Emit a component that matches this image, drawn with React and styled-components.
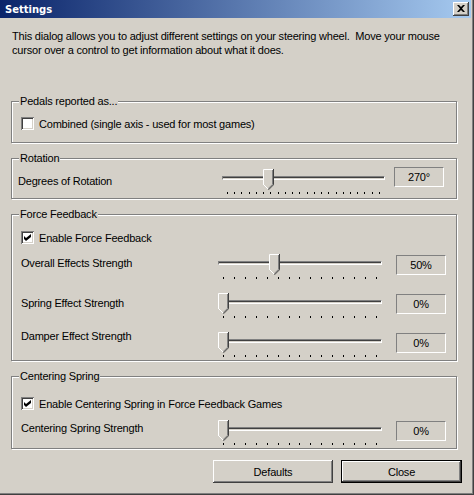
import React from "react";
import styled, { createGlobalStyle } from "styled-components";

const FACE = "#d4d0c8";

const GlobalStyle = createGlobalStyle`
  * { box-sizing: border-box; }
  html, body { margin: 0; padding: 0; background: ${FACE}; }
  body {
    font-family: "Liberation Sans", Arial, sans-serif;
    font-size: 11px;
    color: #000;
  }
`;

const ffRows = [
  { label: "Overall Effects Strength", value: "50%", pos: 51 / 153, top: 7, labelShift: 5 },
  { label: "Spring Effect Strength", value: "0%", pos: 0, top: 11, labelShift: 6 },
  { label: "Damper Effect Strength", value: "0%", pos: 0, top: 11, labelShift: 0 },
];

const CloseGlyph = () => (
  <svg width="8" height="7" viewBox="0 0 8 7">
    <path d="M0 0h2l2 2 2-2h2L5 3.5 8 7H6L4 5 2 7H0l3-3.5z" fill="#000" />
  </svg>
);

const CheckGlyph = () => (
  <svg width="7" height="7" viewBox="0 0 7 7">
    <path d="M0 2l2 2 5-4v3L2 7 0 5z" fill="#000" />
  </svg>
);

const ThumbGlyph = () => (
  <svg width="11" height="21" viewBox="0 0 11 21">
    <path d="M0 0H11V16L5.5 21L0 16Z" fill={FACE} />
    <path d="M0.5 16V0.5H10" stroke="#fff" fill="none" />
    <path d="M0.5 15.5L5 20" stroke="#fff" fill="none" />
    <path d="M10.5 0V15.8L5.5 20.8" stroke="#404040" fill="none" />
    <path d="M9.5 1V15.4L5.2 19.6" stroke="#808080" fill="none" />
  </svg>
);

const Checkbox = ({ checked, children }) => (
  <CheckRow>
    <CheckBox>{checked && <CheckGlyph />}</CheckBox>
    {children}
  </CheckRow>
);

const Slider = ({ pos, ticks }) => (
  <SliderTrackArea>
    <Thumb style={{ left: `calc((100% - 11px) * ${pos})` }}>
      <ThumbGlyph />
    </Thumb>
    <Channel />
    <Ticks>
      {Array.from({ length: ticks }, (_, i) => (
        <Tick key={i} />
      ))}
    </Ticks>
  </SliderTrackArea>
);

export default function App() {
  return (
    <>
      <GlobalStyle />
      <Window>
        <TitleBar>
          <Title>Settings</Title>
          <CaptionButton aria-label="Close">
            <CloseGlyph />
          </CaptionButton>
        </TitleBar>

        <Body>
          <Intro>
            This dialog allows you to adjust different settings on your steering wheel.{"  "}Move your mouse
            <br />
            cursor over a control to get information about what it does.
          </Intro>

          <Group $gap={44} $pad="15px 9px 12px">
            <Legend>Pedals reported as...</Legend>
            <Checkbox>Combined (single axis - used for most games)</Checkbox>
          </Group>

          <Group $gap={15} $pad="7px 9px 4px">
            <Legend>Rotation</Legend>
            <SliderRow $labelWidth={195} $trackWidth={163} $gap={9} $top={0} $indent={-3}>
              <RowLabel $shift={8}>Degrees of Rotation</RowLabel>
              <Slider pos={41 / 152} ticks={22} />
              <ValueBox $shift={1}>270°</ValueBox>
            </SliderRow>
          </Group>

          <Group $gap={15} $pad="16px 9px 3px">
            <Legend>Force Feedback</Legend>
            <Checkbox checked>Enable Force Feedback</Checkbox>
            {ffRows.map((row) => (
              <SliderRow
                key={row.label}
                $labelWidth={183}
                $trackWidth={164}
                $gap={14}
                $top={row.top}
                $indent={0}
              >
                <RowLabel $shift={row.labelShift}>{row.label}</RowLabel>
                <Slider pos={row.pos} ticks={15} />
                <ValueBox $shift={4}>{row.value}</ValueBox>
              </SliderRow>
            ))}
          </Group>

          <Group $gap={15} $pad="20px 9px 3px">
            <Legend>Centering Spring</Legend>
            <Checkbox checked>Enable Centering Spring in Force Feedback Games</Checkbox>
            <SliderRow $labelWidth={183} $trackWidth={164} $gap={14} $top={7} $indent={0}>
              <RowLabel $shift={4}>Centering Spring Strength</RowLabel>
              <Slider pos={0} ticks={15} />
              <ValueBox $shift={4}>0%</ValueBox>
            </SliderRow>
          </Group>

          <ButtonRow>
            <Button $width={120}>Defaults</Button>
            <Button $width={121} $default>
              Close
            </Button>
          </ButtonRow>
        </Body>
      </Window>
    </>
  );
}

const Window = styled.div`
  width: 474px;
  height: 495px;
  display: flex;
  flex-direction: column;
  background: ${FACE};
  box-shadow: inset -1px -1px 0 #404040, inset -2px -2px 0 #808080;
  letter-spacing: -0.2px;
`;

const TitleBar = styled.div`
  height: 18px;
  margin-right: 3px;
  padding: 0 2px 0 5px;
  display: flex;
  align-items: center;
  justify-content: space-between;
  background: linear-gradient(to right, #0a246a, #a6caf0);
`;

const Title = styled.span`
  font-family: "DejaVu Sans", Verdana, sans-serif;
  font-weight: bold;
  font-size: 10px;
  letter-spacing: 0;
  color: #fff;
`;

const CaptionButton = styled.button`
  width: 16px;
  height: 14px;
  margin: 0;
  padding: 0 0 1px;
  border: none;
  display: flex;
  align-items: center;
  justify-content: center;
  background: ${FACE};
  box-shadow: inset -1px -1px 0 #404040, inset 1px 1px 0 #fff,
    inset -2px -2px 0 #808080;
`;

const Body = styled.div`
  flex: 1;
  display: flex;
  flex-direction: column;
  align-items: flex-start;
  padding: 11px 12px 0 11px;
`;

const Intro = styled.p`
  margin: 0 0 0 1px;
  line-height: 14px;
  white-space: pre-wrap;
`;

const Group = styled.div`
  position: relative;
  width: 446px;
  margin-top: ${(p) => p.$gap}px;
  padding: ${(p) => p.$pad};
  display: flex;
  flex-direction: column;
  border: 1px solid #808080;
  box-shadow: 1px 1px 0 #fff, inset 1px 1px 0 #fff;
`;

const Legend = styled.span`
  position: absolute;
  top: -8px;
  left: 7px;
  padding: 0 1px;
  line-height: 14px;
  background: ${FACE};
`;

const CheckRow = styled.div`
  height: 13px;
  display: flex;
  align-items: center;
  gap: 5px;
  line-height: 14px;
`;

const CheckBox = styled.span`
  width: 13px;
  height: 13px;
  flex-shrink: 0;
  display: flex;
  align-items: center;
  justify-content: center;
  background: #fff;
  box-shadow: inset 1px 1px 0 #808080, inset -1px -1px 0 #fff,
    inset 2px 2px 0 #404040, inset -2px -2px 0 ${FACE};
`;

const SliderRow = styled.div`
  height: 28px;
  margin-top: ${(p) => p.$top}px;
  margin-left: ${(p) => p.$indent}px;
  display: grid;
  grid-template-columns: ${(p) => p.$labelWidth}px ${(p) => p.$trackWidth}px 50px;
  column-gap: ${(p) => p.$gap}px;
  align-items: start;
`;

const RowLabel = styled.span`
  margin-top: ${(p) => p.$shift}px;
  line-height: 14px;
  white-space: nowrap;
`;

const ValueBox = styled.div`
  height: 20px;
  margin-top: ${(p) => p.$shift}px;
  display: flex;
  align-items: center;
  justify-content: center;
  line-height: 14px;
  border: 1px solid;
  border-color: #808080 #fff #fff #808080;
`;

const SliderTrackArea = styled.div`
  position: relative;
  height: 28px;
  padding-top: 10px;
`;

const Thumb = styled.div`
  position: absolute;
  top: 3px;
  width: 11px;
  height: 21px;
  line-height: 0;
`;

const Channel = styled.div`
  height: 4px;
  background: ${FACE};
  border-style: solid;
  border-width: 1px;
  border-color: #808080 #fff #fff #808080;
  box-shadow: inset 0 1px 0 #404040;
`;

const Ticks = styled.div`
  height: 2px;
  margin-top: 12px;
  padding: 0 5px;
  display: flex;
  justify-content: space-between;
`;

const Tick = styled.span`
  width: 1px;
  height: 2px;
  background: #000;
`;

const ButtonRow = styled.div`
  align-self: stretch;
  margin-top: 11px;
  display: flex;
  justify-content: flex-end;
  gap: 8px;
`;

const Button = styled.button`
  width: ${(p) => p.$width}px;
  height: 23px;
  padding: 0;
  border: none;
  background: ${FACE};
  color: #000;
  font: inherit;
  letter-spacing: inherit;
  box-shadow: ${(p) =>
    p.$default
      ? `inset 0 0 0 1px #000, inset -2px -2px 0 #404040, inset 2px 2px 0 #fff, inset -3px -3px 0 #808080`
      : `inset -1px -1px 0 #404040, inset 1px 1px 0 #fff, inset -2px -2px 0 #808080`};
`;
